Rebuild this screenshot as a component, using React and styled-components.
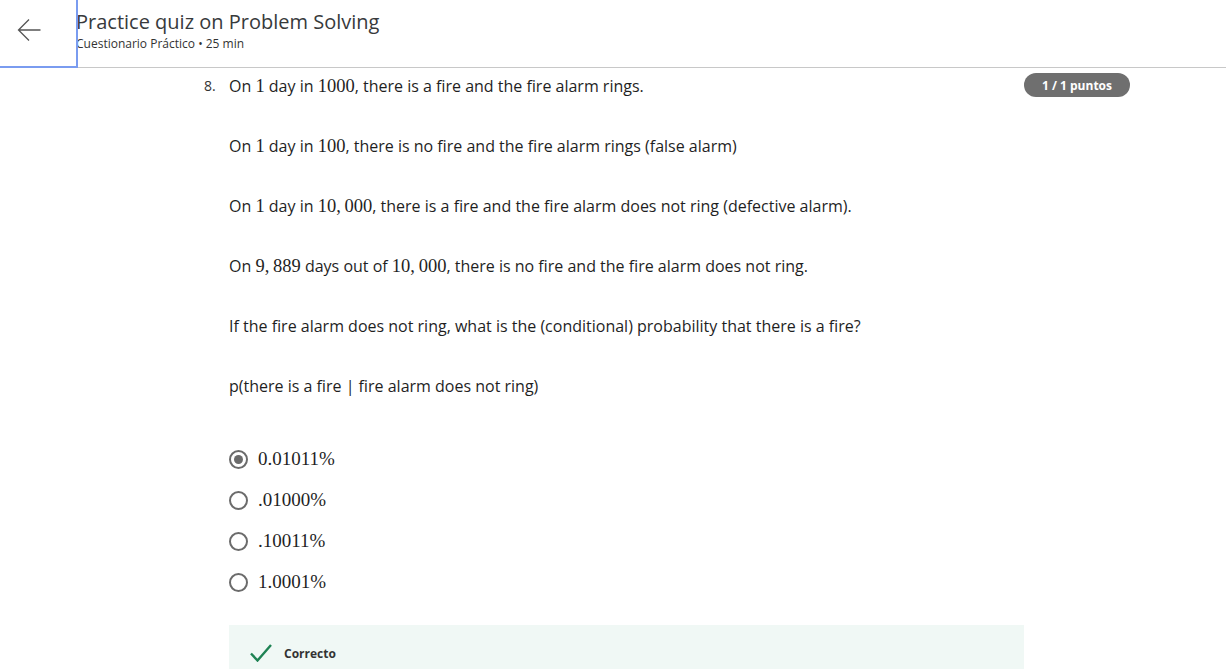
import styled, { createGlobalStyle } from "styled-components";

const GlobalStyle = createGlobalStyle`
  body {
    margin: 0;
    background: #ffffff;
    font-family: "Open Sans", "Liberation Sans", sans-serif;
    color: #1f1f1f;
  }
`;

const options = [
  { label: "0.01011%", checked: true },
  { label: ".01000%", checked: false },
  { label: ".10011%", checked: false },
  { label: "1.0001%", checked: false },
];

const App = () => {
  return (
    <Page>
      <GlobalStyle />
      <Header>
        <BackButton aria-label="back">
          <svg width="24" height="24" viewBox="0 0 24 24" fill="none">
            <path d="M23.5 12H1.5M12 1.5L1.5 12L12 22.5" stroke="#555" strokeWidth="1.3" />
          </svg>
        </BackButton>
        <TitleBlock>
          <Title>Practice quiz on Problem Solving</Title>
          <Subtitle>Cuestionario Práctico • 25 min</Subtitle>
        </TitleBlock>
      </Header>
      <Question>
        <Number>8.</Number>
        <Body>
          <Para>
            On <M>1</M> day in <M>1000</M>, there is a fire and the fire alarm rings.
          </Para>
          <Para>
            On <M>1</M> day in <M>100</M>, there is no fire and the fire alarm rings (false alarm)
          </Para>
          <Para>
            On <M>1</M> day in <M>10,&thinsp;000</M>, there is a fire and the fire alarm does not ring
            (defective alarm).
          </Para>
          <Para>
            On <M>9,&thinsp;889</M> days out of <M>10,&thinsp;000</M>, there is no fire and the fire
            alarm does not ring.
          </Para>
          <Para>
            If the fire alarm does not ring, what is the (conditional) probability that there is a
            fire?
          </Para>
          <Para>p(there is a fire | fire alarm does not ring)</Para>
          <Options>
            {options.map((o) => (
              <Option key={o.label}>
                <Radio $checked={o.checked} />
                <OptionText>{o.label}</OptionText>
              </Option>
            ))}
          </Options>
          <Feedback>
            <svg width="22" height="18" viewBox="0 0 22 18" fill="none">
              <path d="M1 9.5L7.5 16.5L21 1" stroke="#1f8354" strokeWidth="2.4" />
            </svg>
            <FeedbackText>Correcto</FeedbackText>
          </Feedback>
        </Body>
        <Score>1 / 1 puntos</Score>
      </Question>
    </Page>
  );
};

const Page = styled.div`
  width: 1226px;
  height: 669px;
  overflow: hidden;
`;

const Header = styled.header`
  display: flex;
  height: 67px;
  border-bottom: 1px solid #c8c8c8;
`;

const BackButton = styled.div`
  width: 78px;
  height: 68px;
  flex-shrink: 0;
  box-sizing: border-box;
  border-right: 2px solid #7a9cf0;
  border-bottom: 2px solid #7a9cf0;
  display: flex;
  align-items: center;
  justify-content: center;
  padding-right: 18px;
  padding-bottom: 6px;
  position: relative;
  z-index: 1;
`;

const TitleBlock = styled.div`
  display: flex;
  flex-direction: column;
  padding-top: 8px;
  margin-left: -2px;
`;

const Title = styled.h1`
  margin: 0;
  font-size: 20px;
  font-weight: 400;
  color: #373a3c;
  line-height: 28px;
`;

const Subtitle = styled.div`
  font-size: 12px;
  color: #333;
  line-height: 16px;
`;

const Question = styled.section`
  display: flex;
  padding-left: 204px;
  padding-top: 5px;
`;

const Number = styled.div`
  width: 25px;
  font-size: 14px;
  line-height: 24px;
  padding-top: 1px;
  color: #333;
`;

const Body = styled.div`
  width: 795px;
  padding-top: 1px;
`;

const Para = styled.p`
  margin: 0 0 36px;
  font-size: 16px;
  line-height: 24px;
  color: #1f1f1f;
`;

const M = styled.span`
  font-family: "Liberation Serif", "DejaVu Serif", serif;
  font-size: 18.5px;
`;

const Options = styled.div`
  display: flex;
  flex-direction: column;
  gap: 17px;
  padding-top: 13px;
`;

const Option = styled.div`
  display: flex;
  align-items: center;
  height: 24px;
`;

const Radio = styled.span`
  width: 19px;
  height: 19px;
  box-sizing: border-box;
  border-radius: 50%;
  border: 2px solid #6b6b6b;
  margin-right: 10px;
  display: flex;
  align-items: center;
  justify-content: center;
  &::after {
    content: "";
    width: 9px;
    height: 9px;
    border-radius: 50%;
    background: #6b6b6b;
    display: ${(p) => (p.$checked ? "block" : "none")};
  }
`;

const OptionText = styled.span`
  font-family: "Liberation Serif", "DejaVu Serif", serif;
  font-size: 19px;
  color: #1f1f1f;
`;

const Feedback = styled.div`
  margin-top: 31px;
  background: #f0f8f5;
  height: 60px;
  box-sizing: border-box;
  display: flex;
  align-items: flex-start;
  padding: 19px 0 0 21px;
  gap: 12px;
`;

const FeedbackText = styled.span`
  font-size: 12px;
  line-height: 18px;
  font-weight: 700;
  color: #333;
  padding-top: 1px;
`;

const Score = styled.div`
  margin-top: 0px;
  height: 24px;
  width: 106px;
  border-radius: 12px;
  background: #6f6f6f;
  color: #fff;
  font-size: 12px;
  font-weight: 700;
  display: flex;
  align-items: center;
  justify-content: center;
`;

export default App;
